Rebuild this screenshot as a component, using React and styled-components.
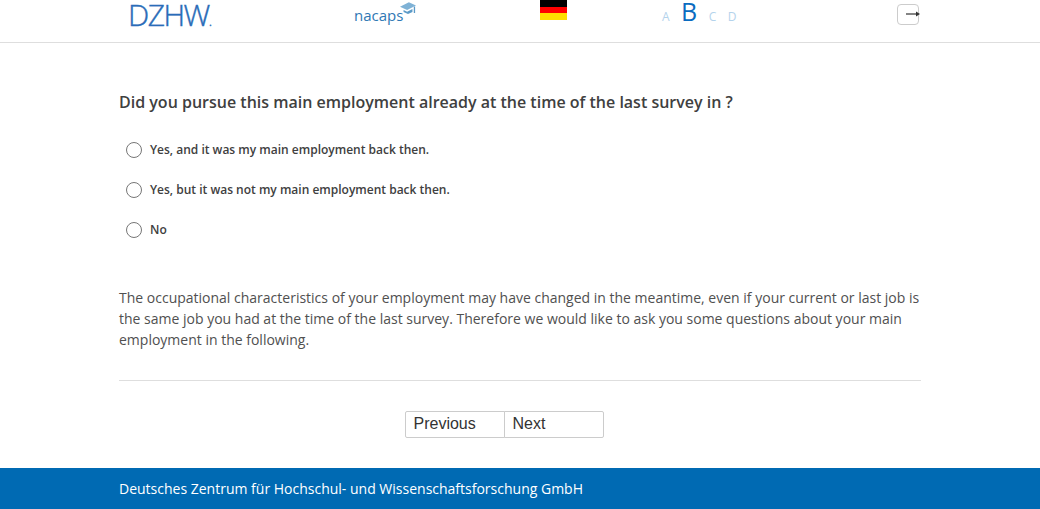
import React from "react";
import styled, { createGlobalStyle } from "styled-components";

const OPTIONS = [
  "Yes, and it was my main employment back then.",
  "Yes, but it was not my main employment back then.",
  "No",
];

const App = () => {
  return (
    <Page>
      <GlobalStyle />
      <Header>
        <HeaderInner>
          <DzhwCell>
            <DzhwLogo>
              DZHW<DzhwDot>.</DzhwDot>
            </DzhwLogo>
          </DzhwCell>
          <NacapsCell>
            <NacapsLogo>nacaps</NacapsLogo>
            <HatIcon viewBox="0 0 18 15">
              <path d="M0 5 L10 0 L18 3.5 L8 8.5 Z" fill="#7fb2d6" />
              <path d="M4 8.5 L8 10.5 L14 7.5 L14 11 L9 13 L4 11 Z" fill="#5b9ac7" />
              <path d="M15.5 5 L17 4.5 L17 12 L15.5 12 Z" fill="#5b9ac7" />
            </HatIcon>
          </NacapsCell>
          <FlagCell>
            <Flag>
              <FlagStripe color="#000000" />
              <FlagStripe color="#ff0000" />
              <FlagStripe color="#ffdd00" />
            </Flag>
          </FlagCell>
          <SizeCell>
            <SizeLetter>A</SizeLetter>
            <SizeLetter active>B</SizeLetter>
            <SizeLetter>C</SizeLetter>
            <SizeLetter>D</SizeLetter>
          </SizeCell>
          <LogoutCell>
            <LogoutButton>
              <ArrowIcon viewBox="0 0 15 8">
                <path d="M0 4 H11" stroke="#333" strokeWidth="1.2" />
                <path d="M10 1.5 L14 4 L10 6.5 Z" fill="#333" />
              </ArrowIcon>
            </LogoutButton>
          </LogoutCell>
        </HeaderInner>
      </Header>
      <Main>
        <Question>
          Did you pursue this main employment already at the time of the last survey in ?
        </Question>
        <OptionList>
          {OPTIONS.map((label) => (
            <Option key={label}>
              <Radio />
              <OptionLabel>{label}</OptionLabel>
            </Option>
          ))}
        </OptionList>
        <Note>
          The occupational characteristics of your employment may have changed in the
          meantime, even if your current or last job is the same job you had at the time of
          the last survey. Therefore we would like to ask you some questions about your main
          employment in the following.
        </Note>
        <Divider />
        <Pager>
          <PagerButton>Previous</PagerButton>
          <PagerButton>Next</PagerButton>
        </Pager>
      </Main>
      <Footer>
        <FooterText>Deutsches Zentrum für Hochschul- und Wissenschaftsforschung GmbH</FooterText>
      </Footer>
    </Page>
  );
};

const GlobalStyle = createGlobalStyle`
  html, body {
    margin: 0;
    padding: 0;
    background: #ffffff;
  }
`;

const Page = styled.div`
  width: 1040px;
  height: 509px;
  display: flex;
  flex-direction: column;
  overflow: hidden;
  font-family: "Open Sans", "Liberation Sans", sans-serif;
  color: #404040;
`;

const Header = styled.header`
  height: 43px;
  flex: none;
  box-sizing: border-box;
  border-bottom: 1px solid #dedede;
`;

const HeaderInner = styled.div`
  width: 802px;
  height: 42px;
  margin: 0 auto;
  display: flex;
`;

const DzhwCell = styled.div`
  width: 235px;
  padding-left: 9px;
  box-sizing: border-box;
`;

const DzhwLogo = styled.div`
  font-family: "Open Sans", sans-serif;
  font-weight: 300;
  font-size: 30px;
  line-height: 30px;
  letter-spacing: -1.5px;
  color: #2a6cb8;
  -webkit-text-stroke: 0.4px #2a6cb8;
`;

const DzhwDot = styled.span`
  font-size: 14px;
  letter-spacing: 0;
`;

const NacapsCell = styled.div`
  width: 186px;
  display: flex;
  align-items: flex-start;
`;

const NacapsLogo = styled.div`
  margin-top: 5px;
  font-size: 15px;
  line-height: 20px;
  color: #2f78b4;
`;

const HatIcon = styled.svg`
  width: 16px;
  height: 14px;
  margin-top: 2px;
  margin-left: -3px;
`;

const FlagCell = styled.div`
  width: 122px;
`;

const Flag = styled.div`
  width: 27px;
  height: 20px;
  display: flex;
  flex-direction: column;
`;

const FlagStripe = styled.div`
  flex: 1;
  background: ${(p) => p.color};
`;

const SizeCell = styled.div`
  width: 235px;
  display: flex;
  align-items: flex-end;
  height: 25px;
  gap: 11.5px;
`;

const SizeLetter = styled.span`
  font-size: ${(p) => (p.active ? "25px" : "12px")};
  line-height: ${(p) => (p.active ? "27px" : "17px")};
  color: ${(p) => (p.active ? "#0a6bc0" : "#b4d3ec")};
`;

const LogoutCell = styled.div`
  flex: 1;
  padding-top: 4px;
`;

const LogoutButton = styled.div`
  width: 22px;
  height: 21px;
  box-sizing: border-box;
  border: 1px solid #cccccc;
  border-radius: 4px;
  background: #ffffff;
  position: relative;
`;

const ArrowIcon = styled.svg`
  position: absolute;
  left: 8px;
  top: 5px;
  width: 15px;
  height: 8px;
`;

const Main = styled.main`
  flex: 1;
  width: 802px;
  margin: 0 auto;
  padding-top: 48px;
  box-sizing: border-box;
`;

const Question = styled.h2`
  margin: 0;
  font-size: 16px;
  line-height: 22px;
  font-weight: 600;
  color: #404040;
`;

const OptionList = styled.div`
  margin-top: 17px;
  display: flex;
  flex-direction: column;
`;

const Option = styled.div`
  height: 40px;
  padding-left: 7px;
  display: flex;
  align-items: center;
  gap: 8px;
`;

const Radio = styled.span`
  width: 16px;
  height: 16px;
  box-sizing: border-box;
  border: 1px solid #767676;
  border-radius: 50%;
  background: #ffffff;
`;

const OptionLabel = styled.span`
  padding-bottom: 2px;
  font-size: 12px;
  font-weight: 600;
  color: #404040;
`;

const Note = styled.p`
  margin: 37px 0 0;
  font-size: 14px;
  line-height: 21px;
  color: #505050;
`;

const Divider = styled.hr`
  margin: 30px 0 0;
  border: 0;
  border-top: 1px solid #dedede;
`;

const Pager = styled.div`
  margin-top: 30px;
  padding-right: 32px;
  display: flex;
  justify-content: center;
`;

const PagerButton = styled.div`
  width: 100px;
  height: 27px;
  box-sizing: border-box;
  border: 1px solid #cccccc;
  padding-left: 8px;
  font-family: "Liberation Sans", Arial, sans-serif;
  font-size: 16px;
  line-height: 24px;
  color: #333333;
  background: #ffffff;

  &:first-child {
    border-radius: 2px 0 0 2px;
  }

  &:last-child {
    margin-left: -1px;
    border-radius: 0 2px 2px 0;
  }
`;

const Footer = styled.footer`
  height: 41px;
  flex: none;
  background: #006ab3;
`;

const FooterText = styled.div`
  width: 802px;
  margin: 0 auto;
  font-size: 14px;
  line-height: 41px;
  color: #ffffff;
`;

export default App;
